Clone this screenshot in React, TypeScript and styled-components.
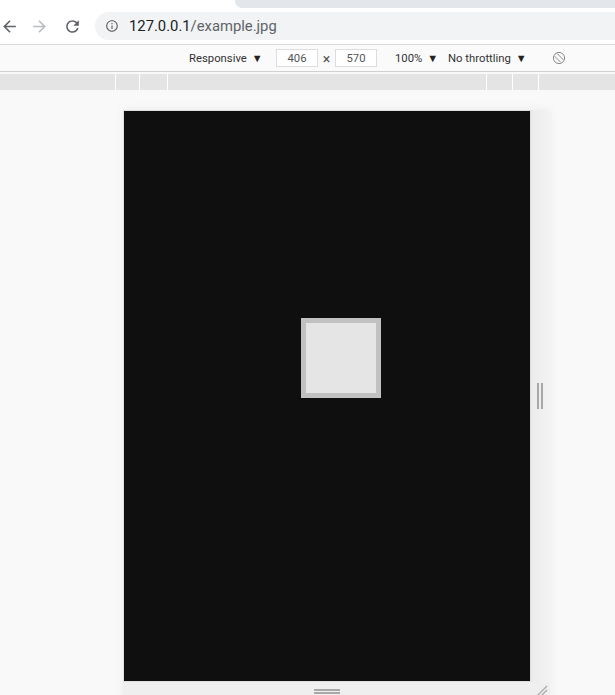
import React from "react";
import styled, { createGlobalStyle } from "styled-components";

const Global = createGlobalStyle`
  html, body { margin: 0; padding: 0; background: #f9f9f9; overflow: hidden; }
  body { width: 615px; height: 695px; font-family: Roboto, "Liberation Sans", sans-serif; }
`;

const Page = styled.div`
  display: flex;
  flex-direction: column;
  width: 615px;
  height: 695px;
  overflow: hidden;
  & > * { flex-shrink: 0; }
`;

const TabStrip = styled.div`
  height: 8px;
  display: flex;
  background: #ffffff;
`;

const Tab = styled.div`
  margin-left: 235px;
  flex: 1;
  background: #e3e6ea;
  border-bottom-left-radius: 7px;
`;

const AddressRow = styled.div`
  height: 36px;
  display: flex;
  align-items: center;
  background: #ffffff;
  border-bottom: 1px solid #dadce0;
`;

const NavIcon = styled.svg<{ $ml: number }>`
  flex: none;
  margin-left: ${(p) => p.$ml}px;
  width: 19px;
  height: 19px;
`;

const Omnibox = styled.div`
  margin-left: 13px;
  flex: 1;
  height: 28px;
  display: flex;
  align-items: center;
  background: #f1f3f4;
  border-radius: 14px 0 0 14px;
`;

const InfoIcon = styled.svg`
  margin-left: 10px;
  width: 14px;
  height: 14px;
  flex: none;
`;

const Url = styled.span`
  margin-left: 10px;
  font-size: 14.8px;
  color: #5f6368;
`;

const Host = styled.span`
  color: #202124;
`;

const DevToolbar = styled.div`
  height: 26px;
  display: flex;
  align-items: center;
  background: #fafafa;
  border-bottom: 1px solid #d0d0d0;
  padding-left: 189px;
  font-size: 11.3px;
  color: #333333;
`;

const Item = styled.div<{ $w: number }>`
  flex: none;
  width: ${(p) => p.$w}px;
  display: flex;
  align-items: center;
  white-space: nowrap;
`;

const Caret = styled.span`
  font-size: 11px;
  margin-left: 5px;
  color: #222222;
`;

const SizeInput = styled.div`
  flex: none;
  width: 40px;
  height: 16px;
  border: 1px solid #dddddd;
  background: #ffffff;
  color: #555555;
  display: flex;
  align-items: center;
  justify-content: center;
`;

const Times = styled.div`
  flex: none;
  width: 17px;
  text-align: center;
  color: #555555;
  font-size: 14px;
  padding-top: 2px;
`;

const Ruler = styled.div`
  margin-top: 2px;
  height: 16px;
  display: grid;
  grid-template-columns: 115px 23px 27px 318px 25px 25px 1fr;
  column-gap: 1px;
  background: #ffffff;
`;

const RulerSeg = styled.div`
  background: #e4e4e4;
`;

const Viewport = styled.div`
  flex: 1;
  padding: 20px 0 0 123px;
  background: #f9f9f9;
`;

const Device = styled.div`
  display: grid;
  grid-template-columns: 408px 19px;
  grid-template-rows: 572px 20px;
  background: #efefef;
  width: 427px;
  box-shadow: 0 0 10px rgba(0, 0, 0, 0.06);
`;

const Screen = styled.div`
  background: #0f0f0f;
  border: 1px solid #dedede;
  padding: 207px 0 0 177px;
`;

const Picture = styled.div`
  width: 70px;
  height: 70px;
  background: #e5e5e5;
  border: 5px solid #c1c1c1;
`;

const SideHandle = styled.div`
  background: linear-gradient(to right, #ebebeb, #f3f3f3);
  display: flex;
  align-items: center;
  padding-left: 6px;
  gap: 2px;
`;

const VLine = styled.div`
  width: 2px;
  height: 26px;
  background: #a8a8a8;
`;

const BottomHandle = styled.div`
  background: #efefef;
  display: flex;
  flex-direction: column;
  align-items: center;
  padding-top: 7px;
  gap: 1px;
`;

const HLine = styled.div`
  width: 26px;
  height: 2px;
  background: #a8a8a8;
`;

const Corner = styled.div`
  background: #efefef;
  display: flex;
  align-items: flex-start;
  padding: 3px 0 0 5px;
`;

const RotateIcon = () => (
  <svg width="14" height="14" viewBox="0 0 14 14" fill="none" stroke="#8a8a8a" strokeWidth="1">
    <circle cx="7" cy="7" r="5.6" />
    <line x1="2.6" y1="5.2" x2="8.8" y2="11.4" />
    <line x1="5.2" y1="2.6" x2="11.4" y2="8.8" />
  </svg>
);

export default function App() {
  return (
    <Page>
      <Global />
      <TabStrip>
        <Tab />
      </TabStrip>
      <AddressRow>
        <NavIcon $ml={0} viewBox="0 0 24 24">
          <path fill="#5f6368" d="M20 11H7.83l5.59-5.59L12 4l-8 8 8 8 1.41-1.41L7.83 13H20v-2z" />
        </NavIcon>
        <NavIcon $ml={11} viewBox="0 0 24 24">
          <path fill="#b9bcc0" d="M12 4l-1.41 1.41L16.17 11H4v2h12.17l-5.58 5.59L12 20l8-8z" />
        </NavIcon>
        <NavIcon $ml={14} viewBox="0 0 24 24">
          <path
            fill="#5f6368"
            d="M17.65 6.35C16.2 4.9 14.21 4 12 4c-4.42 0-7.99 3.58-7.99 8s3.57 8 7.99 8c3.73 0 6.84-2.55 7.73-6h-2.08c-.82 2.33-3.04 4-5.65 4-3.31 0-6-2.69-6-6s2.69-6 6-6c1.66 0 3.14.69 4.22 1.78L13 11h7V4l-2.35 2.35z"
          />
        </NavIcon>
        <Omnibox>
          <InfoIcon viewBox="0 0 24 24">
            <path
              fill="#5f6368"
              d="M11 7h2v2h-2zm0 4h2v6h-2zm1-9C6.48 2 2 6.48 2 12s4.48 10 10 10 10-4.48 10-10S17.52 2 12 2zm0 18c-4.41 0-8-3.59-8-8s3.59-8 8-8 8 3.59 8 8-3.59 8-8 8z"
            />
          </InfoIcon>
          <Url>
            <Host>127.0.0.1</Host>/example.jpg
          </Url>
        </Omnibox>
      </AddressRow>
      <DevToolbar>
        <Item $w={87}>
          Responsive<Caret>▼</Caret>
        </Item>
        <SizeInput>406</SizeInput>
        <Times>×</Times>
        <SizeInput>570</SizeInput>
        <Item $w={18} />
        <Item $w={53}>
          100%<Caret>▼</Caret>
        </Item>
        <Item $w={104}>
          No throttling<Caret>▼</Caret>
        </Item>
        <Item $w={20}>
          <RotateIcon />
        </Item>
      </DevToolbar>
      <Ruler>
        <RulerSeg />
        <RulerSeg />
        <RulerSeg />
        <RulerSeg />
        <RulerSeg />
        <RulerSeg />
        <RulerSeg />
      </Ruler>
      <Viewport>
        <Device>
          <Screen>
            <Picture />
          </Screen>
          <SideHandle>
            <VLine />
            <VLine />
          </SideHandle>
          <BottomHandle>
            <HLine />
            <HLine />
          </BottomHandle>
          <Corner>
            <svg width="12" height="12" viewBox="0 0 12 12" stroke="#a8a8a8" strokeWidth="1.2">
              <line x1="1" y1="11" x2="11" y2="1" />
              <line x1="5" y1="11" x2="11" y2="5" />
            </svg>
          </Corner>
        </Device>
      </Viewport>
    </Page>
  );
}
